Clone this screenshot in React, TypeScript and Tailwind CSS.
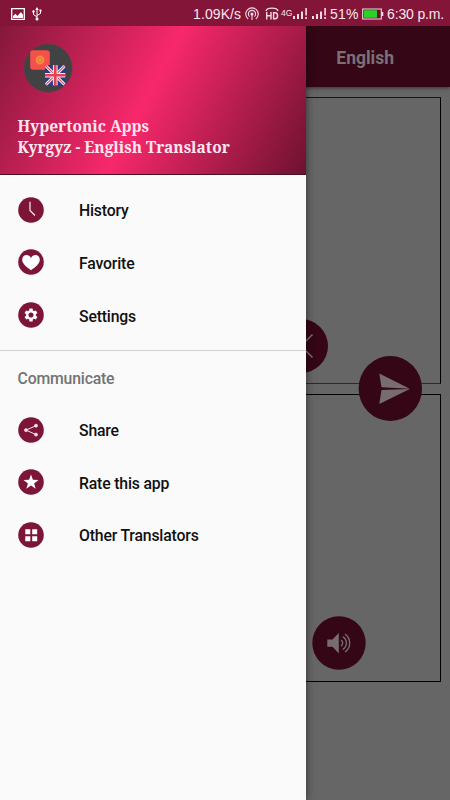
import type { ReactNode } from "react";

const Disc = ({ children }: { children: ReactNode }) => (
  <svg viewBox="0 0 26 26" className="size-[26px] shrink-0">
    <circle cx="13" cy="13" r="12.8" fill="#7d1537" />
    {children}
  </svg>
);

const icons = {
  history: <path d="M12 4.7V13.5L17 18.5" fill="none" stroke="#f7dfe7" strokeWidth="1.3" />,
  heart: (
    <path
      d="M13 21.3C9 18 4.2 14.9 4.2 10.7C4.2 8 6.1 6.1 8.5 6.1C10.5 6.1 12.1 7.2 13 8.9C13.9 7.2 15.5 6.1 17.5 6.1C19.9 6.1 21.8 8 21.8 10.7C21.8 14.9 17 18 13 21.3Z"
      fill="#fff"
    />
  ),
  gear: (
    <g transform="translate(5.2 5.2) scale(.65)">
      <path
        fill="#fff"
        d="M19.43 12.98c.04-.32.07-.64.07-.98s-.03-.66-.07-.98l2.11-1.65c.19-.15.24-.42.12-.64l-2-3.46c-.12-.22-.39-.3-.61-.22l-2.49 1c-.52-.4-1.08-.73-1.69-.98l-.38-2.65C14.46 2.18 14.25 2 14 2h-4c-.25 0-.46.18-.49.42l-.38 2.65c-.61.25-1.17.59-1.69.98l-2.49-1c-.23-.09-.49 0-.61.22l-2 3.46c-.13.22-.07.49.12.64l2.11 1.65c-.04.32-.07.65-.07.98s.03.66.07.98l-2.11 1.65c-.19.15-.24.42-.12.64l2 3.46c.12.22.39.3.61.22l2.49-1c.52.4 1.08.73 1.69.98l.38 2.65c.03.24.24.42.49.42h4c.25 0 .46-.18.49-.42l.38-2.65c.61-.25 1.17-.59 1.69-.98l2.49 1c.23.09.49 0 .61-.22l2-3.46c.12-.22.07-.49-.12-.64l-2.11-1.65zM12 16c-2.21 0-4-1.79-4-4s1.79-4 4-4 4 1.79 4 4-1.79 4-4 4z"
      />
    </g>
  ),
  share: (
    <g fill="#f9e6ec" stroke="#f9e6ec">
      <path d="M18 8.7L8 13.1L18 17.6" fill="none" strokeWidth="1" />
      <circle cx="18" cy="8.7" r="1.6" strokeWidth=".5" />
      <circle cx="8" cy="13.1" r="1.6" strokeWidth=".5" />
      <circle cx="18" cy="17.6" r="1.6" strokeWidth=".5" />
    </g>
  ),
  star: (
    <path
      d="M13 5.5L14.9 10.8L20.5 11L16.1 14.4L17.7 19.8L13 16.6L8.3 19.8L9.9 14.4L5.5 11L11.1 10.8Z"
      fill="#fff"
    />
  ),
  grid: <path d="M7.3 7.3h5v5h-5zM14.2 7.3h5v5h-5zM7.3 14.2h5v5h-5zM14.2 14.2h5v5h-5z" fill="#fff" />,
};

const mainItems: [string, ReactNode][] = [
  ["History", icons.history],
  ["Favorite", icons.heart],
  ["Settings", icons.gear],
];

const communicateItems: [string, ReactNode][] = [
  ["Share", icons.share],
  ["Rate this app", icons.star],
  ["Other Translators", icons.grid],
];

const Menu = ({ items }: { items: [string, ReactNode][] }) => (
  <ul>
    {items.map(([label, icon]) => (
      <li key={label} className="flex h-[52.6px] items-center gap-[35.5px] pl-[17.5px]">
        <Disc>{icon}</Disc>
        <span className="pt-[3px] text-[15.8px] font-medium tracking-[-0.18px] text-[#111]">{label}</span>
      </li>
    ))}
  </ul>
);

const Signal = () => (
  <svg viewBox="0 0 15 11" className="h-[11px] w-[15px]" fill="#f6dbe5">
    <path d="M0 8h2v3H0zM4 6h2v5H4zM8 3.5h2V11H8zM12.3 0h1.6v7.5h-1.6zM12.3 9h1.6v2h-1.6z" />
  </svg>
);

const StatusBar = () => (
  <div className="flex h-[26px] shrink-0 items-center bg-[#821538] pt-px font-['Liberation_Sans',sans-serif] text-[14px] leading-none text-[#fbe6ed]">
    <svg viewBox="0 0 14 12" className="ml-[11px] h-3 w-3.5">
      <path d="M.7.7h12.6v10.6H.7z" fill="none" stroke="#fff" strokeWidth="1.3" />
      <path d="M2 10V8l2.5-2.2L6.3 8 10 4l2 2.8V10z" fill="#fff" />
    </svg>
    <svg viewBox="0 0 10 14" className="ml-[7px] h-3.5 w-2.5" fill="none" stroke="#fff" strokeWidth="1">
      <path d="M5 2v10M5 10L1.5 7.5V4.7M5 8.5L8.5 6.5V4" />
      <path d="M5 0L6.8 3H3.2zM7.5 2.5h2v2h-2z" fill="#fff" stroke="none" />
      <circle cx="1.5" cy="4.5" r="1.2" fill="#fff" stroke="none" />
      <circle cx="5" cy="12" r="1.5" fill="#fff" stroke="none" />
    </svg>
    <span className="ml-[151px] w-[49px] whitespace-nowrap tracking-[0.1px]">1.09K/s</span>
    <svg viewBox="0 0 14 14" className="ml-[3px] size-3.5" fill="none" stroke="#f6dbe5" strokeWidth="1.1">
      <path d="M3.2 12A6.2 6.2 0 1 1 10.8 12M4.5 9.6A3.6 3.6 0 1 1 9.5 9.6M7 7v6" />
      <circle cx="7" cy="7" r="1" fill="#f6dbe5" />
    </svg>
    <svg viewBox="0 0 14 13" className="ml-[6px] h-[13px] w-3.5" fill="none" stroke="#f6dbe5" strokeWidth="1.4">
      <path d="M1 4C2 .2 12 .2 13 4M1.7 5v7.5M6 5v7.5M1.7 8.7H6M8.6 5.7v6.1h1.5c3.3 0 3.3-6.1 0-6.1z" />
    </svg>
    <span className="ml-[2px] w-[12px] text-[8.5px]">4G</span>
    <Signal />
    <span className="w-[4px]" />
    <Signal />
    <span className="ml-[3px] w-[29px] tracking-[0.2px]">51%</span>
    <svg viewBox="0 0 22 12" className="ml-[3px] h-3 w-[22px]">
      <path d="M.7 1h18.6v10H.7z" fill="#6b0f2c" stroke="#f6dbe5" strokeWidth="1.1" />
      <path d="M2 2.2h13v7.6H2z" fill="#28d328" />
      <path d="M19.5 4h1.8v4h-1.8z" fill="#f6dbe5" />
    </svg>
    <span className="ml-[3px] whitespace-nowrap tracking-[-0.15px]">6:30 p.m.</span>
  </div>
);

const Avatar = () => (
  <svg viewBox="0 0 50 50" className="size-[50px]">
    <circle cx="25" cy="25" r="24.2" fill="#414244" stroke="#75374b" strokeWidth=".7" />
    <rect x="7.2" y="7.2" width="19.6" height="19.6" rx="3" fill="#f6504b" />
    <circle cx="17" cy="17" r="4.2" fill="#f5923f" stroke="#f47941" strokeWidth="1.2" strokeDasharray="1 .6" />
    <circle cx="17" cy="17" r="2" fill="none" stroke="#de683b" strokeWidth=".7" />
    <svg x="22" y="22" width="20.5" height="20.5" viewBox="0 0 20 20">
      <clipPath id="ukClip">
        <rect width="20" height="20" rx="3" />
      </clipPath>
      <g clipPath="url(#ukClip)">
        <path d="M0 0h20v20H0z" fill="#283a8c" />
        <path d="M0 0L20 20M20 0L0 20" stroke="#eee4ef" strokeWidth="3" />
        <path d="M0 0L20 20M20 0L0 20" stroke="#db4659" strokeWidth="1" />
        <path d="M10 0v20M0 10h20" stroke="#eee4ef" strokeWidth="4.6" />
        <path d="M10 0v20M0 10h20" stroke="#e24352" strokeWidth="2.6" />
      </g>
    </svg>
  </svg>
);

const Drawer = () => (
  <aside className="absolute inset-y-0 left-0 w-[306px] bg-[#fafafa] shadow-[0_0_8px_rgba(0,0,0,0.55)]">
    <header className="flex h-[149px] flex-col border-b border-[#4b1023] bg-[linear-gradient(118deg,#84183a_0%,#f7286b_48%,#6d1230_100%)] pt-[16.5px] pl-[17.5px]">
      <div className="pl-[5.5px]">
        <Avatar />
      </div>
      <div className="mt-[23px] font-['Noto_Serif','DejaVu_Serif_Condensed','DejaVu_Serif',serif] text-[15.5px] leading-[21px] font-bold whitespace-nowrap text-[#fde6f0]">
        <p>Hypertonic Apps</p>
        <p>Kyrgyz - English Translator</p>
      </div>
    </header>
    <nav className="pt-[8.5px]">
      <Menu items={mainItems} />
      <div className="mt-[9px] h-[53px] border-t border-[#cfcfcf] pt-[16px] pl-[17.5px] text-[15.8px] font-medium tracking-[-0.18px] text-[#737373]">
        Communicate
      </div>
      <Menu items={communicateItems} />
    </nav>
  </aside>
);

export default function App() {
  return (
    <div className="flex h-[800px] w-[450px] flex-col overflow-hidden font-[Roboto,sans-serif]">
      <StatusBar />
      <div className="relative flex-1 overflow-hidden bg-[#666]">
        <div className="flex h-[61px] items-center justify-end bg-[#340616] pr-[56px] text-[17.5px] font-bold text-[#7b7076] shadow-[0_1px_4px_rgba(0,0,0,0.5)]">
          <span className="pt-1">English</span>
        </div>
        <div className="flex flex-col gap-[10px] pt-[10px] pr-[9px] pl-2">
          <div className="h-[287px] border border-x-black border-t-[#2c0a15] border-b-[#4c1a29]" />
          <div className="h-[288px] border border-black" />
        </div>
        <svg viewBox="0 0 54 54" className="absolute top-[293px] left-[274px] size-[54px]">
          <circle cx="27" cy="27" r="27" fill="#340616" />
          <path d="M15.5 15.5L38.5 38.5M38.5 15.5L15.5 38.5" stroke="#796b70" strokeWidth="1.6" />
        </svg>
        <svg viewBox="0 0 64 65" className="absolute top-[330px] left-[358px] h-[65px] w-16">
          <ellipse cx="32.3" cy="32.5" rx="31.7" ry="32.4" fill="#340616" />
          <path d="M21.3 17.5L51.8 32.7L23.5 31.3zM23.5 34L51.8 32.9L21.3 48z" fill="#776d71" />
        </svg>
        <svg viewBox="0 0 54 54" className="absolute top-[590px] left-[312px] size-[54px]">
          <circle cx="27" cy="27" r="26.7" fill="#340616" />
          <path d="M15.3 23.5h5.2l6.3-6.5v20.5l-6.3-6.7h-5.2z" fill="#776d71" />
          <path
            d="M29 24a3.7 3.7 0 0 1 0 6.2M30.7 20.7a7.4 7.4 0 0 1 0 12.8M33 18a11 11 0 0 1 0 18"
            fill="none"
            stroke="#776d71"
            strokeWidth="1.4"
          />
        </svg>
        <Drawer />
      </div>
    </div>
  );
}
